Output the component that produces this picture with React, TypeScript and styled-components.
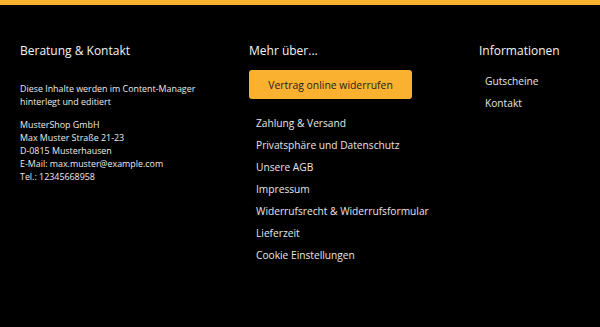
import styled, { createGlobalStyle } from 'styled-components'

const GlobalStyle = createGlobalStyle`
  html, body {
    margin: 0;
    padding: 0;
    background: #000;
  }
  body {
    font-family: 'Open Sans', 'DejaVu Sans', sans-serif;
    color: #ececec;
  }
`

const TopBar = styled.div`
  height: 5px;
  background: #fbb130;
`

const Footer = styled.footer`
  height: 322px;
  background: #000;
  display: grid;
  grid-template-columns: 229px 230px 1fr;
  padding: 37px 0 0 20px;
  box-sizing: border-box;
`

const Column = styled.div`
  display: flex;
  flex-direction: column;
`

const Heading = styled.h3`
  margin: 0;
  font-size: 12px;
  font-weight: 400;
  line-height: 18px;
  color: #f4f4f4;
`

const Text = styled.p<{ $top: number }>`
  margin: ${p => p.$top}px 0 0;
  font-size: 8.9px;
  line-height: 13px;
  color: #ececec;
`

const Button = styled.a`
  display: flex;
  align-items: center;
  justify-content: center;
  width: 163px;
  height: 29px;
  margin-top: 10px;
  box-sizing: border-box;
  background: #fbb130;
  border-radius: 3px;
  color: #1c1c1c;
  font-size: 10.4px;
  font-weight: 500;
  text-decoration: none;
`

const LinkList = styled.ul<{ $top: number; $indent: number }>`
  list-style: none;
  margin: ${p => p.$top}px 0 0;
  padding: 0 0 0 ${p => p.$indent}px;
  display: flex;
  flex-direction: column;
`

const LinkItem = styled.li`
  height: 22px;
  display: flex;
  align-items: center;
  font-size: 10.2px;
  color: #e6e6e6;
`

const moreLinks = [
  'Zahlung & Versand',
  'Privatsphäre und Datenschutz',
  'Unsere AGB',
  'Impressum',
  'Widerrufsrecht & Widerrufsformular',
  'Lieferzeit',
  'Cookie Einstellungen',
]

const infoLinks = ['Gutscheine', 'Kontakt']

export default function App() {
  return (
    <>
      <GlobalStyle />
      <TopBar />
      <Footer>
        <Column>
          <Heading>Beratung &amp; Kontakt</Heading>
          <Text $top={22}>
            Diese Inhalte werden im Content-Manager
            <br />
            hinterlegt und editiert
          </Text>
          <Text $top={10}>
            MusterShop GmbH
            <br />
            Max Muster Straße 21-23
            <br />
            D-0815 Musterhausen
            <br />
            E-Mail: max.muster@example.com
            <br />
            Tel.: 12345668958
          </Text>
        </Column>
        <Column>
          <Heading>Mehr über...</Heading>
          <Button href="#">Vertrag online widerrufen</Button>
          <LinkList $top={13} $indent={7}>
            {moreLinks.map(link => (
              <LinkItem key={link}>{link}</LinkItem>
            ))}
          </LinkList>
        </Column>
        <Column>
          <Heading>Informationen</Heading>
          <LinkList $top={10} $indent={6}>
            {infoLinks.map(link => (
              <LinkItem key={link}>{link}</LinkItem>
            ))}
          </LinkList>
        </Column>
      </Footer>
    </>
  )
}
